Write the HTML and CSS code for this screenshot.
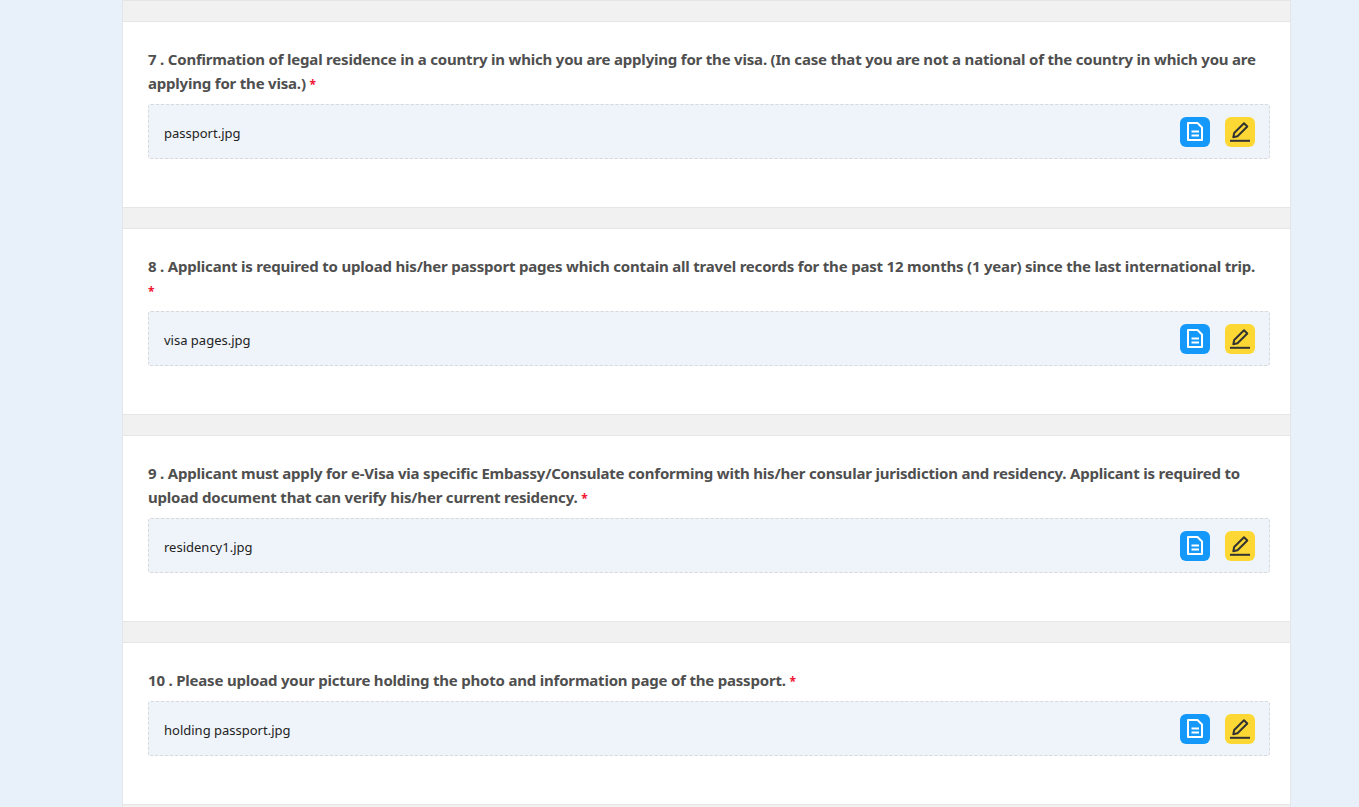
FILE: index.html
```html
<!DOCTYPE html>
<html lang="en">
<head>
<meta charset="utf-8">
<title>Documents</title>
<link rel="stylesheet" href="styles.css">
</head>
<body>
<svg class="defs" aria-hidden="true">
  <symbol id="doc" viewBox="0 0 30 30">
    <path d="M8 6H17.500L22 10.500V23H8Z" fill="none" stroke="#fff" stroke-width="2" stroke-linejoin="round"/>
    <path d="M11.500 14.500H19M11.500 18.500H19" stroke="#fff" stroke-width="2"/>
  </symbol>
  <symbol id="pen" viewBox="0 0 30 30">
    <path d="M19 6.200L22.300 9.500L12.500 19.300L8.300 20.200L9.200 16Z" fill="none" stroke="#333" stroke-width="2" stroke-linejoin="round"/>
    <path d="M5 23.800H25" stroke="#333" stroke-width="2"/>
  </symbol>
</svg>
<main class="panel">
  <section class="card">
    <h3 class="q">7 . Confirmation of legal residence in a country in which you are applying for the visa. (In case that you are not a national of the country in which you are applying for the visa.) <span class="req">*</span></h3>
    <div class="file"><span class="name">passport.jpg</span>
      <div class="actions">
        <button class="btn blue"><svg class="ic"><use href="#doc"/></svg></button>
        <button class="btn yellow"><svg class="ic"><use href="#pen"/></svg></button>
      </div>
    </div>
  </section>
  <section class="card">
    <h3 class="q">8 . Applicant is required to upload his/her passport pages which contain all travel records for the past 12 months (1 year) since the last international trip.<br><span class="req">*</span></h3>
    <div class="file"><span class="name">visa pages.jpg</span>
      <div class="actions">
        <button class="btn blue"><svg class="ic"><use href="#doc"/></svg></button>
        <button class="btn yellow"><svg class="ic"><use href="#pen"/></svg></button>
      </div>
    </div>
  </section>
  <section class="card">
    <h3 class="q">9 . Applicant must apply for e-Visa via specific Embassy/Consulate conforming with his/her consular jurisdiction and residency. Applicant is required to upload document that can verify his/her current residency. <span class="req">*</span></h3>
    <div class="file"><span class="name">residency1.jpg</span>
      <div class="actions">
        <button class="btn blue"><svg class="ic"><use href="#doc"/></svg></button>
        <button class="btn yellow"><svg class="ic"><use href="#pen"/></svg></button>
      </div>
    </div>
  </section>
  <section class="card last">
    <h3 class="q">10 . Please upload your picture holding the photo and information page of the passport. <span class="req">*</span></h3>
    <div class="file"><span class="name">holding passport.jpg</span>
      <div class="actions">
        <button class="btn blue"><svg class="ic"><use href="#doc"/></svg></button>
        <button class="btn yellow"><svg class="ic"><use href="#pen"/></svg></button>
      </div>
    </div>
  </section>
</main>
</body>
</html>
```
FILE: styles.css
```css
html, body { margin: 0; padding: 0; height: 807px; overflow: hidden; }
body { background: #e8f0f9; font-family: "Noto Sans", sans-serif; }
.defs { display: none; }
.panel {
  box-sizing: border-box;
  width: 1169px;
  margin-left: 122px;
  height: 807px;
  padding-top: 20px;
  background: #f1f1f1;
  border: 1px solid #e6e6e6;
  border-width: 1px 1px 0;
  display: flex;
  flex-direction: column;
  gap: 20px;
}
.card {
  box-sizing: border-box;
  height: 187px;
  flex: none;
  background: #fff;
  border-top: 1px solid #e6e6e6;
  border-bottom: 1px solid #e6e6e6;
  padding: 25px 20px 0 25px;
}
.card.last { height: 163px; }
.q {
  margin: 0 0 9px;
  height: 48px;
  font-size: 15px;
  line-height: 24px;
  font-weight: 700;
  color: #4f4f4f;
  letter-spacing: -0.2px;
}
.card.last .q { height: 24px; }
.req { color: #f0142f; font-size: 12px; }
.file {
  box-sizing: border-box;
  height: 55px;
  background: #eff4fb;
  border: 1px dashed #d6d8da;
  border-radius: 3px;
  display: flex;
  align-items: center;
  justify-content: space-between;
  padding: 0 14px 0 15px;
}
.name { font-size: 13px; color: #222; padding-top: 2px; }
.actions { display: flex; gap: 15px; }
.btn {
  width: 30px;
  height: 30px;
  padding: 0;
  border: 0;
  border-radius: 6px;
  display: block;
}
.blue { background: #1499fb; }
.yellow { background: #fdd835; }
.ic { display: block; width: 30px; height: 30px; }
```
